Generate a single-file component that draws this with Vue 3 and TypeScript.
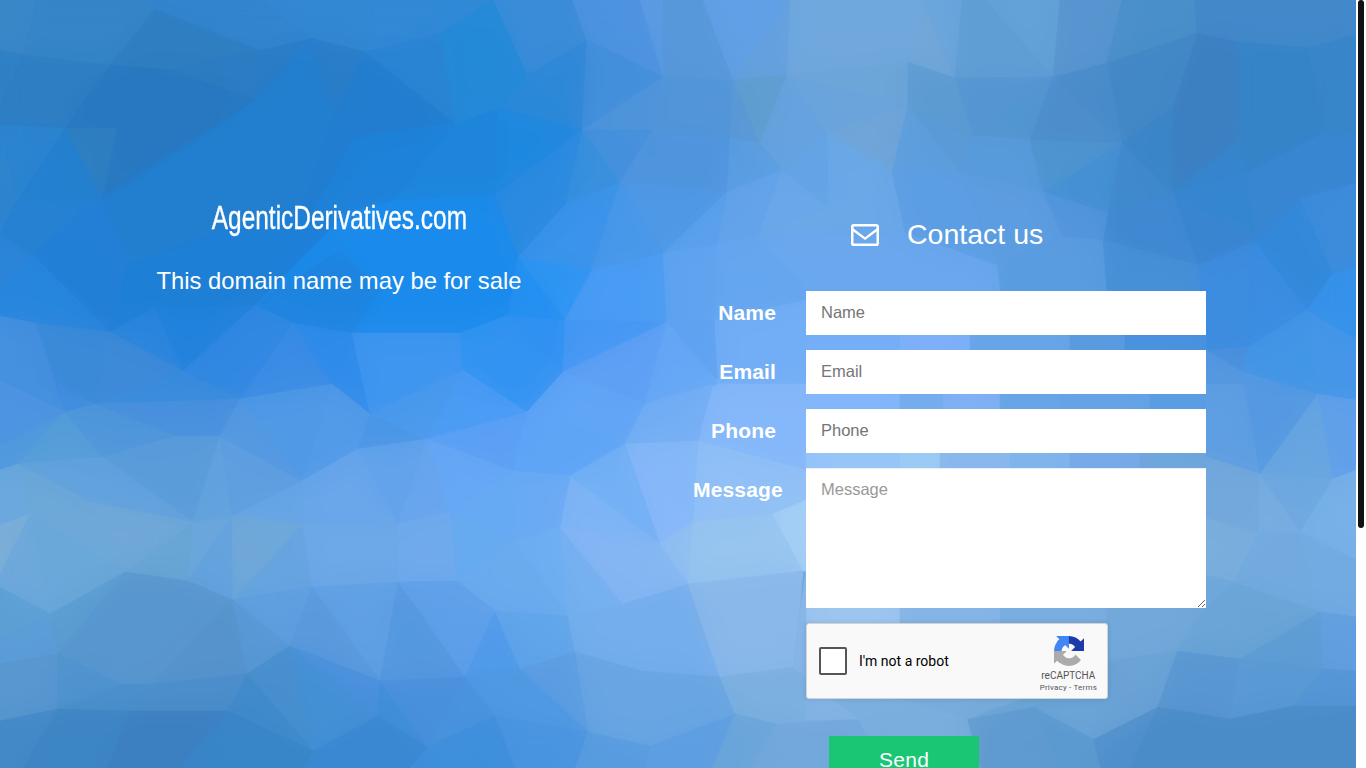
<script setup lang="ts">
const facets: [string, string][] = [
  ['#9cc6f0','806,600 900,600 900,623 806,623'],['#85b5e6','900,600 1000,600 1000,623 900,623'],['#7aade0','1000,600 1107,600 1107,623 1000,623'],
  ['#7ab0de','800,695 1000,695 1000,768 800,768'],['#6ca5d8','1000,695 1107,695 1107,768 1000,768'],['#2a7cc6','260,50 311,38 257,100'],['#85b8fa','690,380 720,380 700,445 690,445'],
  ['#3a87c8','0,0 37,0 23,55 0,50'],['#3585c8','37,0 150,0 155,9 110,65 23,55'],['#2f7ec1','155,9 260,50 170,70 110,65'],
  ['#3285ce','150,0 262,0 311,38 260,50 155,9'],['#3388d2','262,0 375,0 365,52 311,38'],['#3289d6','375,0 493,0 440,33 365,52'],
  ['#2c7cc2','170,70 260,50 257,100'],['#2f80c5','0,50 23,55 0,110'],['#2d7ec3','23,55 110,65 65,128 0,125 0,110'],
  ['#2878c0','110,65 170,70 257,100 102,198 117,128 65,128'],['#2f7fc0','65,128 117,128 102,198'],['#2c84d0','0,125 65,128 18,199'],
  ['#2480d0','65,128 102,198 18,199'],['#2f84ce','0,125 18,199 0,235'],['#2681d3','18,199 102,198 128,265 32,255 0,235'],
  ['#227fd6','102,198 128,265 110,332 32,255'],['#2c84d8','0,235 32,255 0,290'],['#2786dd','0,290 32,255 110,332 36,323 0,316'],
  ['#237fd0','102,198 257,100 311,38 334,116 305,200 128,265'],['#1f7fd6','128,265 305,200 340,220 255,305 155,308 110,332'],
  ['#2a7dc8','311,38 365,52 334,116'],['#227dd0','365,52 455,123 355,137 334,116'],['#2b84d4','365,52 440,33 455,123'],
  ['#207dd0','334,116 355,137 308,220 305,200'],['#1f82d9','355,137 455,123 395,200 308,220'],
  ['#1f86dc','455,123 498,108 495,195 395,200'],['#1a8bec','495,195 518,257 508,315 460,333 352,333 293,323 255,305 340,220 395,200'],
  ['#1e85e0','255,305 293,323 352,333 380,290 340,250'],['#1f88df','498,108 582,130 495,195'],['#2b88d8','498,108 527,75 582,130'],
  ['#3a8cd8','493,0 572,0 587,40 527,75'],['#248ad8','440,33 493,0 527,75 498,108 455,123'],['#2f88d8','527,75 587,40 582,130'],
  ['#4d93e0','587,40 572,0 640,0 663,77'],['#438fdb','587,40 663,77 582,130'],['#5b9ce3','640,0 663,0 663,77'],['#5798da','663,0 703,0 733,80 663,77'],
  ['#61a0e6','703,0 790,0 733,80'],['#65a0de','790,0 787,75 733,80'],['#4f95db','582,130 663,77 653,130'],['#4590dd','582,130 653,130 620,182'],
  ['#5295d9','663,77 733,80 730,138 653,130'],['#3890dd','582,130 620,182 565,205'],['#2b8ae0','495,195 582,130 565,205 518,257'],
  ['#3b93ea','565,205 620,182 592,270 518,257'],['#2d95f3','518,257 592,270 565,320'],['#2490f2','518,257 565,320 508,315'],
  ['#4f98e5','620,182 727,192 663,253'],['#4898ea','620,182 663,253 592,270'],['#5095de','653,130 730,138 727,192 620,182'],
  ['#5a98d6','733,80 760,143 730,138'],['#5f9ecf','733,80 787,75 760,143'],['#66a2df','787,75 827,133 782,170 760,143'],
  ['#5a9ee2','730,138 760,143 782,170 727,192'],['#64a3ea','727,192 782,170 758,235 717,245'],['#5aa0ec','663,253 727,192 717,245'],
  ['#4a9cf4','592,270 663,253 667,322 565,320'],['#60a4f0','663,253 717,245 720,260 715,320 667,322'],['#6aa7ea','782,170 828,207 758,235'],
  ['#6ba4dc','787,75 908,105 827,133'],['#70a8de','790,0 923,0 908,62 787,75'],['#72a8d8','908,62 923,0 955,78'],['#6aa5dd','923,0 962,0 955,78'],
  ['#6ca5d8','787,75 908,62 908,105'],['#70a5d8','827,133 908,105 892,172'],['#6aa8e8','827,133 892,172 828,207'],['#64a4e6','782,170 827,133 828,207'],
  ['#5d9ede','892,172 908,105 960,172'],['#6ba8e8','828,207 892,172 905,233 758,235'],['#5c9ee4','892,172 960,172 997,265 905,233'],
  ['#63a2d8','985,0 1060,0 1053,77'],['#5f9ed5','962,0 985,0 1053,77 955,78'],['#5895d0','1060,0 1122,0 1107,63 1053,77'],['#4a90ca','1122,0 1195,0 1197,33 1107,63'],
  ['#468bc7','1195,0 1242,0 1238,42 1197,33'],['#4289ca','1195,0 1356,0 1356,35 1308,48 1238,42 1197,33'],['#3885ca','1308,48 1356,35 1356,133 1322,133'],
  ['#3584c8','1238,42 1308,48 1322,133 1247,172 1238,130'],['#3c80c2','1173,107 1197,33 1238,42 1238,140 1173,192'],['#4388c6','1107,63 1197,33 1173,107 1122,143'],
  ['#4a8cca','1053,77 1107,63 1122,143'],['#5596d2','955,78 1053,77 972,135'],['#5296d0','1053,77 1030,140 972,135'],['#4d8dcc','1053,77 1122,143 1030,140'],
  ['#5c9bd2','908,62 955,78 972,135 908,105'],['#5a9ad5','908,105 972,135 960,172'],['#589bdc','972,135 1030,140 1043,192 960,172'],['#4d95d0','1030,140 1122,143 1043,192'],
  ['#4490d4','1122,143 1108,213 1043,192'],['#3f89cc','1122,143 1173,192 1108,213'],['#3a85c8','1122,143 1173,107 1173,192'],
  ['#3886d2','1247,172 1322,133 1356,133 1356,183 1300,198 1255,242'],['#3586d0','1173,192 1247,172 1255,242'],['#3585ce','1173,192 1238,140 1247,172'],['#4089d2','1108,213 1173,192 1198,265 1103,240'],
  ['#3a85d0','1173,192 1255,242 1198,265'],['#5c9ce0','960,172 1043,192 1063,237 997,265'],['#5295dd','1043,192 1108,213 1103,240 1063,237'],
  ['#5a9ce0','997,265 1063,237 1103,240 1107,291 1000,291'],['#4690d8','1103,240 1198,265 1206,291 1107,291'],['#6aa7ee','905,233 997,265 1000,291 806,291 758,235'],
  ['#3c8ce0','1198,265 1255,242 1248,347 1206,350'],['#3289da','1255,242 1300,198 1333,273'],['#3d8cdc','1300,198 1356,183 1356,267 1333,273'],
  ['#3289da','1255,242 1333,273 1307,310'],['#3692ea','1333,273 1356,267 1356,340 1307,310'],['#3a8de2','1255,242 1307,310 1248,347'],
  ['#4296e6','1248,347 1307,310 1318,394 1242,372'],['#4596e8','1307,310 1356,340 1356,400 1318,394'],['#4a90dc','1206,350 1248,347 1242,372'],

  ['#4590df','36,323 65,412 0,380 0,316'],['#3b8ad8','36,323 110,332 95,404 65,412'],['#2a85dd','110,332 155,308 183,371'],['#3d8ad8','110,332 183,371 95,404'],
  ['#2082dc','155,308 255,305 183,371'],['#3188e2','255,305 293,323 240,399 183,371'],['#3a8ce4','293,323 332,384 240,399'],['#2e8bea','293,323 352,333 370,414 332,384'],
  ['#3f96f0','352,333 460,333 463,370 370,414'],['#2f95f0','460,333 508,315 463,370'],['#3393f2','508,315 563,372 527,412 463,370'],['#3091f3','508,315 565,320 563,372'],
  ['#4498f3','565,320 667,322 563,372'],['#5ea0f4','563,372 667,322 645,404'],['#66a8f6','667,322 718,384 645,404'],['#5ea2f0','667,322 715,320 720,384'],
  ['#65a6f0','717,245 758,235 806,291 806,300 715,320'],['#72aef6','715,320 806,300 806,390 718,384'],['#85b8fa','718,384 806,384 806,470 698,441'],
  ['#90c0f6','693,522 698,441 806,470 806,514 773,514'],

  ['#4e94e2','0,380 65,412 0,445'],['#3f8ce0','65,412 95,404 58,384'],['#398cdc','183,371 240,399 95,404'],['#4a90de','95,404 240,399 220,436 175,436'],
  ['#4f99e6','240,399 332,384 302,481'],['#529be8','332,384 370,414 358,449 302,481'],['#4a96e6','370,414 427,439 358,449'],['#4a9cf4','463,370 527,412 427,439'],
  ['#4a9aed','370,414 463,370 427,439'],['#5ca0f5','527,412 513,471 427,439'],['#5ea5f6','527,412 625,444 570,476 513,471'],['#60a5f6','563,372 645,404 625,444 527,412'],
  ['#73aef4','645,404 713,384 698,441 625,444'],['#85b8f8','625,444 698,441 693,522'],['#88b8fa','625,444 693,522 660,544'],['#72b0f5','625,444 570,476 660,544'],['#7fb5f5','570,476 660,544 560,527'],
  ['#90bff0','660,544 693,522 688,584'],['#85b7f3','660,544 688,584 623,604'],['#97c5f0','693,522 773,514 803,571 688,584'],['#a5cff5','773,514 806,500 806,571 803,571'],

  ['#5099dd','0,445 65,412 18,464 0,470'],['#569fd8','65,412 102,457 18,464'],['#5096da','65,412 95,404 175,436 102,457'],['#5a9cda','102,457 175,436 220,436 193,522'],
  ['#62a2de','18,464 102,457 193,522 90,502'],['#6ca8d8','18,464 90,502 30,514'],['#6aa8de','0,470 18,464 30,514 0,525'],['#7cafd8','0,525 30,514 0,575'],
  ['#6ea8d8','30,514 90,502 125,572'],['#70a8d8','90,502 193,522 125,572'],['#68a6d4','193,522 188,581 125,572'],['#6ca7dc','193,522 232,516 188,581'],
  ['#62a2de','232,516 233,600 188,581'],['#63a3de','220,436 232,516 193,522'],['#5f9fe0','220,436 302,481 232,516'],['#5499e2','240,399 302,481 220,436'],
  ['#66a5e6','302,481 303,524 232,516'],['#70a8d8','232,516 303,524 233,600'],['#66a4e0','303,524 312,587 233,600'],['#69a6ea','302,481 358,449 398,524 303,524'],
  ['#62a3ec','358,449 427,439 398,524'],['#68a5ee','427,439 450,512 398,524'],['#66a8f6','427,439 513,471 450,512'],['#66aaf4','450,512 513,471 515,541'],
  ['#6aaaf4','513,471 570,476 560,527 515,541'],['#6daef2','515,541 560,527 568,616'],['#70aaec','398,524 450,512 457,581 398,582'],['#6da8e8','303,524 398,524 398,582 312,587'],
  ['#66aaf0','450,512 515,541 457,581'],['#6aabee','457,581 515,541 568,616 495,611'],['#75b0f0','560,527 623,604 568,616'],['#85b6f4','560,527 660,544 623,604'],
  ['#60a0e4','312,587 398,582 380,681'],['#5f9fe0','233,600 312,587 290,646'],['#5a99dc','312,587 380,681 290,646'],['#5fa0ea','398,582 457,581 495,611 465,677'],
  ['#5498e0','398,582 465,677 380,681'],['#4f9aea','495,611 520,669 465,677'],['#60a5ea','495,611 568,616 575,652 520,669'],['#74aeec','568,616 623,604 642,671 575,652'],
  ['#74aeec','623,604 688,584 720,677 642,671'],['#8ab8ea','688,584 803,571 793,667 720,677'],['#68a5e2','575,652 642,671 650,746 588,732'],['#5c9de2','520,669 575,652 588,732'],
  ['#4f98e2','465,677 520,669 588,732 495,716'],['#68a5e2','642,671 720,677 735,714 650,746'],['#7cb0e0','720,677 793,667 858,719 777,724 735,714'],

  ['#6ea8dc','0,575 30,514 50,614 0,587'],['#6aa8da','30,514 125,572 50,614'],['#5ba0d5','0,587 50,614 0,640'],['#5b9dd8','0,640 50,614 58,654 0,664'],
  ['#5a9dd0','50,614 125,572 58,654'],['#5896cf','125,572 122,684 58,654'],['#5996cf','125,572 188,581 233,600 152,684 122,684'],['#5693cd','233,600 247,674 152,684'],
  ['#5899d5','233,600 290,646 247,674'],['#4490d6','290,646 378,716 313,751'],['#4a90dd','290,646 380,681 378,716'],['#478fce','247,674 290,646 313,751'],
  ['#5897d0','0,664 58,654 58,709 0,721'],['#4f93ce','58,654 122,684 58,709'],['#4a90cc','58,709 122,684 152,684 130,711'],['#4b8ecb','152,684 247,674 228,711 130,711'],
  ['#3f8acb','247,674 313,751 228,711'],['#4389c8','0,721 58,709 23,768 0,768'],['#3d85c4','58,709 130,711 108,768 23,768'],['#3c80c2','130,711 228,711 180,768 108,768'],
  ['#3885c8','228,711 313,751 305,768 180,768'],['#3a88d2','313,751 378,716 428,747 410,768 305,768'],['#3f8ed8','378,716 380,681 428,747'],['#4a90dc','380,681 465,677 428,747'],
  ['#4a92dd','465,677 495,716 428,747'],['#3e8fdc','428,747 495,716 520,768 410,768'],['#4a94e0','495,716 588,732 575,768 515,768'],['#589ce0','588,732 650,746 645,768 575,768'],
  ['#5d9ee2','650,746 735,714 712,768 645,768'],['#6ba5da','735,714 777,724 750,768 712,768'],['#72a8dc','777,724 858,719 880,768 750,768'],

  ['#5598e0','1206,350 1242,372 1243,384 1206,395'],['#5e9ee2','1206,384 1243,384 1260,474 1206,457'],['#5599e2','1243,372 1318,394 1260,474'],['#68a6e0','1318,394 1333,479 1260,474'],
  ['#60a0ea','1318,394 1356,400 1356,470 1333,479'],['#72a8dc','1206,457 1260,474 1258,534 1206,518'],['#78aee0','1260,474 1300,532 1258,534'],['#6ea8e0','1260,474 1333,479 1300,532'],
  ['#78b0e8','1333,479 1356,470 1356,560 1300,532'],['#72aae0','1258,534 1300,532 1320,612 1233,582'],['#72abe2','1300,532 1356,560 1356,617 1320,612'],['#7aaedc','1206,518 1258,534 1233,582 1206,575'],
  ['#6ea8dc','1206,575 1233,582 1203,611'],['#72a8da','1107,600 1206,600 1206,611 1177,651 1107,661'],['#6ba4d6','1233,582 1320,612 1240,659'],['#6ba4d6','1233,582 1240,659 1177,651 1203,611'],
  ['#629fe0','1320,612 1356,617 1356,671 1323,669'],['#5d9cd4','1240,659 1320,612 1323,669'],['#5996d2','1177,651 1240,659 1230,719 1157,707'],['#5a9ad4','1240,659 1323,669 1293,706 1230,719'],
  ['#5496d6','1323,669 1356,671 1356,706 1293,706'],['#4a8cc8','1157,707 1230,719 1293,706 1356,706 1356,768 1130,768'],['#4f90cc','1093,739 1157,707 1130,768 1100,768'],
  ['#5a9ad0','1033,707 1093,739 1100,768 1060,768'],['#5f9ad0','967,719 1033,707 1060,768 980,768'],['#6ba3d6','1107,661 1177,651 1157,707 1093,739'],['#6ba2d6','1107,661 1157,707 1033,707'],
  ['#6ca5d6','1033,695 1107,661 1033,707 967,719'],['#7aaedc','880,700 967,719 980,768 880,768'],['#7ab0de','858,719 890,695 967,719'],['#78acdc','890,695 1033,695 967,719'],['#85b4e6','793,667 806,571 806,720 858,719'],

  ['#75aef6','806,335 900,335 900,350 806,350'],['#7db0f8','900,335 970,335 970,350 900,350'],['#68a5e8','970,335 1070,335 1070,350 970,350'],['#5a9be0','1070,335 1125,335 1125,350 1070,350'],['#4a92de','1125,335 1206,335 1206,350 1125,350'],
  ['#83b6fb','806,394 900,394 900,409 806,409'],['#74aced','900,394 943,394 943,409 900,409'],['#7fb1f4','943,394 1000,394 1000,409 943,409'],['#68a5e6','1000,394 1060,394 1060,409 1000,409'],['#65a3e6','1060,394 1150,394 1150,409 1060,409'],['#5a9de2','1150,394 1206,394 1206,409 1150,409'],
  ['#96c5f8','806,453 900,453 900,468 806,468'],['#9accf5','900,453 940,453 940,468 900,468'],['#8ab8ec','940,453 1010,453 1010,468 940,468'],['#7fb5eb','1010,453 1070,453 1070,468 1010,468'],['#76aae8','1070,453 1140,453 1140,468 1070,468'],['#6fa6dc','1140,453 1206,453 1206,468 1140,468'],
]

const fields = [
  { label: 'Name', placeholder: 'Name' },
  { label: 'Email', placeholder: 'Email' },
  { label: 'Phone', placeholder: 'Phone' },
]
</script>

<template>
  <div class="page">
    <svg class="facets" viewBox="0 0 1356 768" width="1356" height="768" aria-hidden="true">
      <defs>
        <filter id="soft" x="0" y="0" width="100%" height="100%">
          <feGaussianBlur stdDeviation="14" />
        </filter>
        <g id="mesh">
          <polygon v-for="(f, i) in facets" :key="i" :points="f[1]" :fill="f[0]" :stroke="f[0]" stroke-width="0.5" />
        </g>
      </defs>
      <use href="#mesh" />
      <use href="#mesh" filter="url(#soft)" />
      <use href="#mesh" opacity="0.62" />
    </svg>

    <section class="intro">
      <h1 class="domain"><span>AgenticDerivatives.com</span></h1>
      <p class="sale">This domain name may be for sale</p>
    </section>

    <section class="contact">
      <h2 class="heading">
        <svg class="mail" viewBox="0 0 28 22" width="28" height="22" aria-hidden="true">
          <rect x="1.25" y="1.25" width="25.5" height="19.5" rx="1.6" fill="none" stroke="#fff" stroke-width="2.5" />
          <path d="M1.5 5.2 L14 14.6 L26.5 5.2" fill="none" stroke="#fff" stroke-width="2.4" />
        </svg>
        <span>Contact us</span>
      </h2>

      <form class="form" @submit.prevent>
        <div v-for="f in fields" :key="f.label" class="row">
          <label class="label">{{ f.label }}</label>
          <input class="field" type="text" :placeholder="f.placeholder" />
        </div>
        <div class="row">
          <label class="label">Message</label>
          <textarea class="field area" placeholder="Message"></textarea>
        </div>

        <div class="captcha">
          <span class="box"></span>
          <span class="robot">I'm not a robot</span>
          <div class="brand">
            <svg class="logo" viewBox="0 0 64 64" width="30" height="30" aria-hidden="true">
              <path d="M64 31.955l-.033-1.37V4.687l-7.16 7.16C50.948 4.674 42.033.093 32.05.093c-10.4 0-19.622 4.96-25.458 12.64l11.736 11.86a15.55 15.55 0 0 1 4.754-5.334c2.05-1.6 4.952-2.906 8.968-2.906.485 0 .86.057 1.135.163 4.976.393 9.288 3.14 11.828 7.124l-8.307 8.307 32.274.003z" fill="#1c3aa9" />
              <path d="M31.862.094l-1.37.033H4.594l7.16 7.16C4.58 13.147 0 22.06 0 32.046c0 10.4 4.96 19.622 12.64 25.458L24.5 45.768a15.55 15.55 0 0 1-5.334-4.754c-1.6-2.05-2.906-4.952-2.906-8.968 0-.485.057-.86.163-1.135.393-4.976 3.14-9.288 7.124-11.828l8.307 8.307.003-32.274z" fill="#4285f4" />
              <path d="M.001 32.045l.033 1.37v25.898l7.16-7.16c5.86 7.173 14.774 11.754 24.76 11.754 10.4 0 19.622-4.96 25.458-12.64l-11.736-11.86a15.55 15.55 0 0 1-4.754 5.334c-2.05 1.6-4.952 2.906-8.968 2.906-.485 0-.86-.057-1.135-.163-4.976-.393-9.288-3.14-11.828-7.124l8.307-8.307-32.274-.003z" fill="#ababab" />
            </svg>
            <span class="brand-name">reCAPTCHA</span>
            <span class="brand-links">Privacy - Terms</span>
          </div>
        </div>

        <button class="send" type="submit">Send</button>
      </form>
    </section>

    <div class="rail"><div class="thumb"></div></div>
  </div>
</template>

<style scoped>
.page {
  position: relative;
  display: flex;
  box-sizing: border-box;
  width: 1366px;
  min-height: 1117px;
  padding-right: 10px;
  background: #4a8cc8;
  font-family: "Liberation Sans", Arial, sans-serif;
  color: #fff;
  overflow: hidden;
}
.facets {
  position: absolute;
  top: 0;
  left: 0;
  display: block;
}
.rail {
  position: fixed;
  top: 0;
  right: 0;
  bottom: 0;
  width: 10px;
  background: #fff;
}
.thumb {
  width: 6px;
  height: 528px;
  margin-left: 2px;
  border-radius: 3px;
  background: #111;
}
.intro,
.contact {
  position: relative;
  width: 50%;
  box-sizing: border-box;
}
.intro {
  padding-top: 195px;
  text-align: center;
}
.domain {
  margin: 0;
  font-weight: 400;
  font-size: 33px;
  line-height: 45px;
}
.domain span {
  display: inline-block;
  transform: scaleX(0.74);
  white-space: nowrap;
  -webkit-text-stroke: 0.35px #fff;
}
.sale {
  margin: 27px 0 0;
  font-size: 23.8px;
  line-height: 28px;
}
.contact {
  padding-top: 213px;
}
.heading {
  display: flex;
  align-items: center;
  gap: 28px;
  margin: 0 0 36px 173px;
  font-weight: 400;
  font-size: 28.5px;
  line-height: 42px;
}
.mail {
  display: block;
  margin-top: 1px;
}
.form {
  display: flex;
  flex-direction: column;
  gap: 15px;
  padding-left: 15px;
}
.row {
  display: flex;
  align-items: flex-start;
  gap: 30px;
}
.label {
  width: 83px;
  flex: none;
  font-weight: 700;
  font-size: 21px;
  line-height: 44px;
  letter-spacing: 0.15px;
  text-align: right;
  white-space: nowrap;
}
.field {
  box-sizing: border-box;
  display: block;
  width: 400px;
  height: 44px;
  margin: 0;
  padding: 0 15px 2px;
  border: 0;
  border-radius: 0;
  outline: none;
  background: #fff;
  font-family: inherit;
  font-size: 16.5px;
  color: #333;
}
.field::placeholder {
  color: #757575;
  opacity: 1;
}
.area {
  height: 140px;
  padding-top: 11px;
  border-top: 1px solid #eee;
  line-height: 19px;
}
.area::placeholder {
  color: #999;
}
.captcha {
  box-sizing: border-box;
  display: flex;
  align-items: center;
  width: 302px;
  height: 76px;
  margin-left: 113px;
  padding: 0 10px 0 12px;
  border: 1px solid #d3d3d3;
  border-radius: 3px;
  background: #f9f9f9;
  box-shadow: 0 0 4px 1px rgba(0, 0, 0, 0.08);
  color: #000;
  font-family: Roboto, sans-serif;
}
.box {
  box-sizing: border-box;
  flex: none;
  width: 28px;
  height: 28px;
  border: 2px solid #555;
  border-radius: 2px;
  background: #fff;
}
.robot {
  margin-left: 12px;
  font-size: 14px;
}
.brand {
  display: flex;
  flex-direction: column;
  align-items: center;
  margin-left: auto;
  padding-top: 6px;
  color: #555;
}
.logo {
  margin-left: 2px;
}
.brand-name {
  margin-top: 3px;
  font-size: 10px;
  line-height: 13px;
}
.brand-links {
  font-size: 8px;
  line-height: 11px;
  letter-spacing: 0.2px;
}
.send {
  align-self: flex-start;
  width: 150px;
  height: 48px;
  margin: 22px 0 0 136px;
  padding: 0;
  border: 0;
  background: #1ac673;
  color: #fff;
  font-family: inherit;
  font-size: 21px;
  letter-spacing: 0.3px;
}
</style>
